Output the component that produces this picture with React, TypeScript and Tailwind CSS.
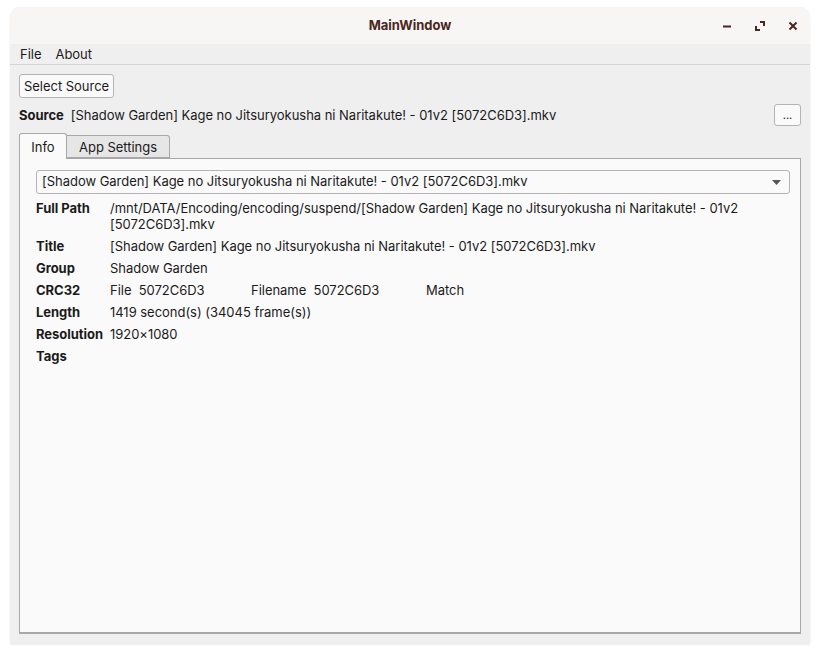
import React from "react"

const FILE = "[Shadow Garden] Kage no Jitsuryokusha ni Naritakute! - 01v2 [5072C6D3].mkv"

const ROWS: { label: string; value: React.ReactNode }[] = [
  {
    label: "Full Path",
    value: (
      <>
        /mnt/DATA/Encoding/encoding/suspend/[Shadow Garden] Kage no Jitsuryokusha ni Naritakute! - 01v2
        <br />
        [5072C6D3].mkv
      </>
    ),
  },
  { label: "Title", value: FILE },
  { label: "Group", value: "Shadow Garden" },
  {
    label: "CRC32",
    value: (
      <div className="flex">
        <span className="w-[141px]">File&nbsp;&nbsp;5072C6D3</span>
        <span className="w-[175px]">Filename&nbsp;&nbsp;5072C6D3</span>
        <span>Match</span>
      </div>
    ),
  },
  { label: "Length", value: "1419 second(s) (34045 frame(s))" },
  { label: "Resolution", value: "1920×1080" },
  { label: "Tags", value: "" },
]

export default function App() {
  return (
    <div className="h-[654px] w-[820px] bg-white pl-[10px] pt-[7px] font-['Inter','Noto_Sans',sans-serif] text-[13px] tracking-[-0.03px] text-[#1a1a1a]">
      <div className="flex h-[637px] w-[800px] flex-col overflow-hidden rounded-t-[10px] bg-[#efefef] shadow-[0_1px_2px_rgba(0,0,0,0.08)]">
        {/* title bar */}
        <div className="relative flex h-[37px] shrink-0 items-center justify-center bg-[#f8f5f5]">
          <span className="text-[13px] font-bold text-[#4a2620]">MainWindow</span>
          <div className="absolute right-[10px] top-0 flex h-full items-center gap-[19px] text-[#4a2620]">
            <svg width="14" height="14" viewBox="0 0 14 14">
              <rect x="3" y="6.5" width="8" height="2" fill="currentColor" />
            </svg>
            <svg width="14" height="14" viewBox="0 0 14 14">
              <path d="M3 7v4h4M11 7V3H7" fill="none" stroke="currentColor" strokeWidth="2" />
            </svg>
            <svg width="14" height="14" viewBox="0 0 14 14">
              <path d="M3.5 3.5l7 7M10.5 3.5l-7 7" stroke="currentColor" strokeWidth="2" />
            </svg>
          </div>
        </div>

        {/* menu bar */}
        <div className="flex h-[21px] shrink-0 items-center gap-[14px] border-b border-[#d4d4d4] bg-[#efefef] px-[10px] pt-[1px]">
          <span>File</span>
          <span>About</span>
        </div>

        <div className="flex flex-1 flex-col px-[9px] pb-[10px]">
          <div className="pt-[9px]">
            <button className="h-[24px] rounded-[3px] border border-[#b4b4b4] bg-[#fafafa] px-[4px] pt-[1px] leading-none">
              Select Source
            </button>
          </div>

          <div className="mt-[6px] flex h-[22px] items-center">
            <span className="pt-[1px] font-bold">Source</span>
            <span className="ml-[7px] flex-1 pt-[1px]">{FILE}</span>
            <button className="h-[22px] w-[27px] rounded-[3px] border border-[#b4b4b4] bg-[#fafafa] text-[11px] leading-none">
              ...
            </button>
          </div>

          {/* tabs */}
          <div className="mt-[7px] flex items-end">
            <div className="z-10 -mb-px flex h-[26px] w-[48px] items-center justify-center rounded-t-[3px] border border-b-0 border-[#a8a8a8] bg-[#fafafa] pt-[2px]">
              Info
            </div>
            <div className="flex h-[23px] w-[103px] items-center justify-center rounded-tr-[3px] border border-l-0 border-[#a8a8a8] bg-[#e6e6e6] pt-[3px]">
              App Settings
            </div>
          </div>

          <div className="flex-1 border border-b-2 border-[#a8a8a8] bg-[#fafafa] pl-[16px] pr-[10px] pt-[11px]">
            <div className="flex h-[24px] items-center justify-between rounded-[3px] border border-[#b4b4b4] bg-[#fafafa] pl-[5px] pr-[8px]">
              <span>{FILE}</span>
              <svg width="9" height="5" viewBox="0 0 9 5">
                <path d="M0 0h9L4.5 5z" fill="#555" />
              </svg>
            </div>

            <div className="mt-[3px] flex flex-col">
              {ROWS.map((r) => (
                <div key={r.label} className="flex py-[3px] leading-[16px]">
                  <span className="w-[74px] shrink-0 font-bold">{r.label}</span>
                  <div>{r.value}</div>
                </div>
              ))}
            </div>
          </div>
        </div>
      </div>
    </div>
  )
}
